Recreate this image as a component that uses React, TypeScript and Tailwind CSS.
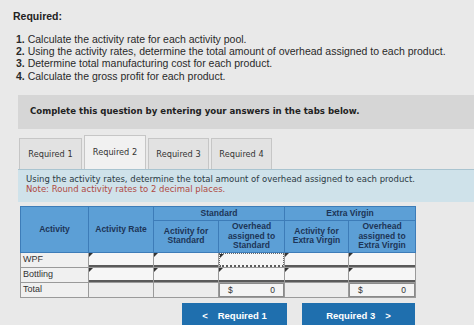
import React from "react";

const sans = { fontFamily: '"Liberation Sans", Arial, sans-serif' };
const dv = { fontFamily: '"DejaVu Sans", Verdana, sans-serif' };

function Mark() {
  return (
    <span className="absolute left-0 top-0 w-0 h-0 border-t-[4px] border-t-[#333] border-r-[4px] border-r-transparent" />
  );
}

function InputCell({ dotted = false }: { dotted?: boolean }) {
  return (
    <td className="p-0 border border-[#9a9a9a] bg-[#eeeeee]">
      <div
        className={
          "relative h-[14px] bg-[#f6f6f6] border-b-2 border-b-[#5a5a5a] " +
          (dotted ? "border border-dotted border-[#666] border-b-2" : "")
        }
      >
        <Mark />
      </div>
    </td>
  );
}

function EmptyCell() {
  return (
    <td className="p-0 border border-[#9a9a9a] bg-[#ececec]">
      <div className="h-[14px]" />
    </td>
  );
}

function DollarCell() {
  return (
    <td className="p-0 border border-[#9a9a9a] bg-[#ececec]">
      <div className="flex justify-between items-center h-[14px] px-[8px] bg-[#f4f4f4] border border-[#8a8a8a] text-[8.5px] text-[#333]">
        <span>$</span>
        <span>0</span>
      </div>
    </td>
  );
}

function LabelCell({ children }: { children: React.ReactNode }) {
  return (
    <td className="p-0 border border-[#9a9a9a] bg-[#f0f0f0]">
      <div className="h-[14px] flex items-center pl-[2px] text-[9px] text-[#333]">{children}</div>
    </td>
  );
}

const th = "p-0 bg-[#5c9fd6] border border-[#3d7cb8] font-semibold";

export default function App() {
  return (
    <div
      className="w-[474px] h-[325px] overflow-hidden bg-[#e9e9e9] text-[#222]"
      style={sans}
    >
      <div className="pl-[13px] pt-[9px] text-[10.5px] font-bold">Required:</div>
      <ol className="pl-[16px] mt-[8px] text-[10.5px] leading-[12.3px] text-[#2a2a2a]">
        <li>
          <b>1.</b> Calculate the activity rate for each activity pool.
        </li>
        <li className="whitespace-nowrap">
          <b>2.</b> Using the activity rates, determine the total amount of overhead assigned to each product.
        </li>
        <li>
          <b>3.</b> Determine total manufacturing cost for each product.
        </li>
        <li>
          <b>4.</b> Calculate the gross profit for each product.
        </li>
      </ol>

      <div
        className="ml-[18px] mt-[13px] h-[34px] bg-[#d6d6d6] flex items-center pl-[12px] text-[8.6px] font-bold text-[#222]"
        style={dv}
      >
        Complete this question by entering your answers in the tabs below.
      </div>

      <div className="ml-[19px] mt-[6px] flex items-end gap-[2px] text-[8.2px] text-[#333]" style={dv}>
        <div className="w-[63px] h-[31px] flex items-center justify-center bg-[#e2e2e2] border border-[#c6c6c6] border-b-0">
          Required 1
        </div>
        <div className="w-[62px] h-[34px] flex items-center justify-center bg-[#f1f1f1] border border-[#c6c6c6] border-b-0">
          Required 2
        </div>
        <div className="w-[61px] h-[31px] flex items-center justify-center bg-[#e2e2e2] border border-[#c6c6c6] border-b-0">
          Required 3
        </div>
        <div className="w-[61px] h-[31px] flex items-center justify-center bg-[#e2e2e2] border border-[#c6c6c6] border-b-0">
          Required 4
        </div>
      </div>

      <div
        className="ml-[18px] h-[33px] bg-[#cfe2ea] border-t border-[#a9c4d0] pl-[8px] pt-[4px] text-[8.5px] leading-[10.5px]"
        style={dv}
      >
        <div className="text-[#2b3a44] whitespace-nowrap">
          Using the activity rates, determine the total amount of overhead assigned to each product.
        </div>
        <div className="text-[#b04a44]">Note: Round activity rates to 2 decimal places.</div>
      </div>

      <table className="ml-[20px] mt-[4px] border-collapse table-fixed w-[395px]">
        <colgroup>
          <col className="w-[68px]" />
          <col className="w-[65px]" />
          <col className="w-[65px]" />
          <col className="w-[66px]" />
          <col className="w-[64px]" />
          <col className="w-[67px]" />
        </colgroup>
        <thead className="text-[#1d3557] text-[8.5px] leading-[9.5px]">
          <tr>
            <th rowSpan={2} className={th}>
              Activity
            </th>
            <th rowSpan={2} className={th}>
              Activity Rate
            </th>
            <th colSpan={2} className={th}>
              <div className="h-[13px] flex items-center justify-center">Standard</div>
            </th>
            <th colSpan={2} className={th}>
              <div className="h-[13px] flex items-center justify-center">Extra Virgin</div>
            </th>
          </tr>
          <tr>
            <th className={th}>
              <div className="h-[31px] flex items-center justify-center">
                Activity for
                <br />
                Standard
              </div>
            </th>
            <th className={th}>
              <div className="h-[31px] flex items-center justify-center">
                Overhead
                <br />
                assigned to
                <br />
                Standard
              </div>
            </th>
            <th className={th}>
              <div className="h-[31px] flex items-center justify-center">
                Activity for
                <br />
                Extra Virgin
              </div>
            </th>
            <th className={th}>
              <div className="h-[31px] flex items-center justify-center">
                Overhead
                <br />
                assigned to
                <br />
                Extra Virgin
              </div>
            </th>
          </tr>
        </thead>
        <tbody>
          <tr>
            <LabelCell>WPF</LabelCell>
            <InputCell />
            <InputCell />
            <InputCell dotted />
            <InputCell />
            <InputCell />
          </tr>
          <tr>
            <LabelCell>Bottling</LabelCell>
            <InputCell />
            <InputCell />
            <InputCell />
            <InputCell />
            <InputCell />
          </tr>
          <tr>
            <LabelCell>Total</LabelCell>
            <EmptyCell />
            <EmptyCell />
            <DollarCell />
            <EmptyCell />
            <DollarCell />
          </tr>
        </tbody>
      </table>

      <div className="ml-[182px] mt-[5px] flex gap-[15px] text-[9.5px] font-bold text-white">
        <div className="w-[105px] h-[26px] bg-[#1f6fae] flex items-center justify-center gap-[10px]">
          <span>&lt;</span>
          <span>Required 1</span>
        </div>
        <div className="w-[113px] h-[26px] bg-[#1f6fae] flex items-center justify-center gap-[10px]">
          <span>Required 3</span>
          <span>&gt;</span>
        </div>
      </div>
    </div>
  );
}
